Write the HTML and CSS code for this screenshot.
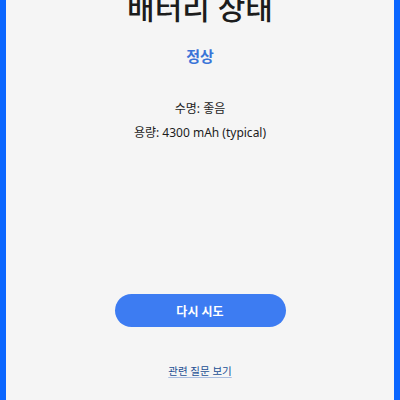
FILE: index.html
```html
<!DOCTYPE html>
<html lang="ko">
<head>
<meta charset="utf-8">
<link rel="stylesheet" href="styles.css">
</head>
<body>
<main class="screen">
  <h1 class="title">배터리 상태</h1>
  <p class="status">정상</p>
  <div class="details">
    <p class="detail">수명: 좋음</p>
    <p class="detail">용량: 4300 mAh (typical)</p>
  </div>
  <div class="spacer"></div>
  <button class="retry" type="button">다시 시도</button>
  <a class="faq" href="#">관련 질문 보기</a>
</main>
</body>
</html>
```
FILE: styles.css
```css
html, body {
  margin: 0;
  padding: 0;
  height: 100%;
  overflow: hidden;
}
body {
  font-family: "Noto Sans", "Noto Sans CJK KR", sans-serif;
  background: #f5f5f5;
}
.screen {
  box-sizing: border-box;
  height: 400px;
  border-left: 6px solid #0a66ff;
  border-right: 6px solid #0a66ff;
  background: #f5f5f5;
  display: flex;
  flex-direction: column;
  align-items: center;
  overflow: hidden;
}
.title {
  margin: -12px 0 0;
  font-size: 30px;
  font-weight: 500;
  line-height: 40px;
  color: #1c1c1c;
}
.status {
  margin: 18px 0 0;
  font-size: 15px;
  font-weight: 700;
  line-height: 20px;
  color: #3a74d8;
}
.details {
  margin-top: 34px;
  display: flex;
  flex-direction: column;
  align-items: center;
  gap: 6px;
}
.detail {
  margin: 0;
  font-size: 12px;
  line-height: 18px;
  color: #1c1c1c;
}
.spacer {
  flex: 1;
}
.retry {
  width: 171px;
  height: 33px;
  border: none;
  border-radius: 17px;
  background: #3d7cf2;
  color: #fff;
  font-family: inherit;
  font-size: 12px;
  font-weight: 700;
}
.faq {
  margin: 37px 0 22px;
  font-size: 10.5px;
  line-height: 14px;
  color: #234f94;
  text-decoration: underline;
  text-decoration-color: #a9bde0;
  text-underline-offset: 2px;
}
```
